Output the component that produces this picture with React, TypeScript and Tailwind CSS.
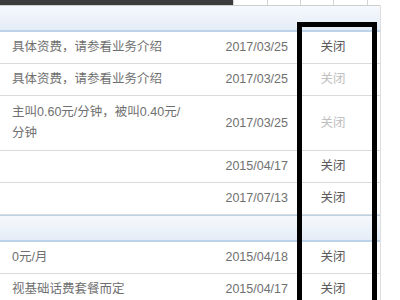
type Row = {
  desc: string[]
  date: string
  muted?: boolean
  tall?: boolean
}

const firstGroup: Row[] = [
  { desc: ['具体资费，请参看业务介绍'], date: '2017/03/25' },
  { desc: ['具体资费，请参看业务介绍'], date: '2017/03/25', muted: true },
  { desc: ['主叫0.60元/分钟，被叫0.40元/', '分钟'], date: '2017/03/25', muted: true, tall: true },
  { desc: [], date: '2015/04/17' },
  { desc: [], date: '2017/07/13' },
]

const secondGroup: Row[] = [
  { desc: ['0元/月'], date: '2015/04/18' },
  { desc: ['视基础话费套餐而定'], date: '2015/04/17' },
]

function GroupHeader({ top }: { top?: boolean }) {
  return (
    <div
      className={
        'bg-gradient-to-b from-[#f6f9fc] to-[#e4edf7] border-b-2 border-[#bdd3ea] ' +
        (top ? 'h-[27px] border-t border-t-[#cfcfcf]' : 'h-[27px] border-t border-t-[#bcd2e9]')
      }
    />
  )
}

function ServiceRow({ row }: { row: Row }) {
  return (
    <div
      className={
        'grid grid-cols-[210px_90px_66px_1fr] items-center border-b border-[#dadada] ' +
        (row.tall ? 'h-[55px]' : 'h-[32px]')
      }
    >
      <div className="pl-[12px] leading-[21px]">
        {row.desc.map((line, i) => (
          <div key={i}>{line}</div>
        ))}
      </div>
      <div className="pr-[12px] text-right">{row.date}</div>
      <div className={'text-center ' + (row.muted ? 'text-[#c0c0c0]' : 'text-[#5a5a5a]')}>关闭</div>
      <div />
    </div>
  )
}

export default function App() {
  return (
    <div
      className="relative w-[400px] h-[300px] overflow-hidden bg-white text-[12.5px] text-[#707070]"
      style={{ fontFamily: '"Liberation Sans", "Noto Sans CJK SC", sans-serif' }}
    >
      {/* tab strip */}
      <div className="flex h-[5px]">
        <div className="w-[233px] bg-[#3c3c3c]" />
        <div className="w-[34px] border-l border-[#d4d4d4]" />
        <div className="w-[33px] border-l border-[#d4d4d4]" />
        <div className="w-[33px] border-l border-[#d4d4d4]" />
        <div className="w-[34px] border-l border-[#d4d4d4]" />
        <div className="flex-1 border-l border-[#d4d4d4]" />
      </div>

      <div className="w-[381px] h-[295px] border-r border-[#dedede]">
        <GroupHeader top />
        {firstGroup.map((r, i) => (
          <ServiceRow key={i} row={r} />
        ))}
        <GroupHeader />
        {secondGroup.map((r, i) => (
          <ServiceRow key={i} row={r} />
        ))}
      </div>

      {/* highlight frame over the action column */}
      <div className="absolute left-[297px] top-[22px] w-[80px] h-[300px] border-[5px] border-black" />
    </div>
  )
}
